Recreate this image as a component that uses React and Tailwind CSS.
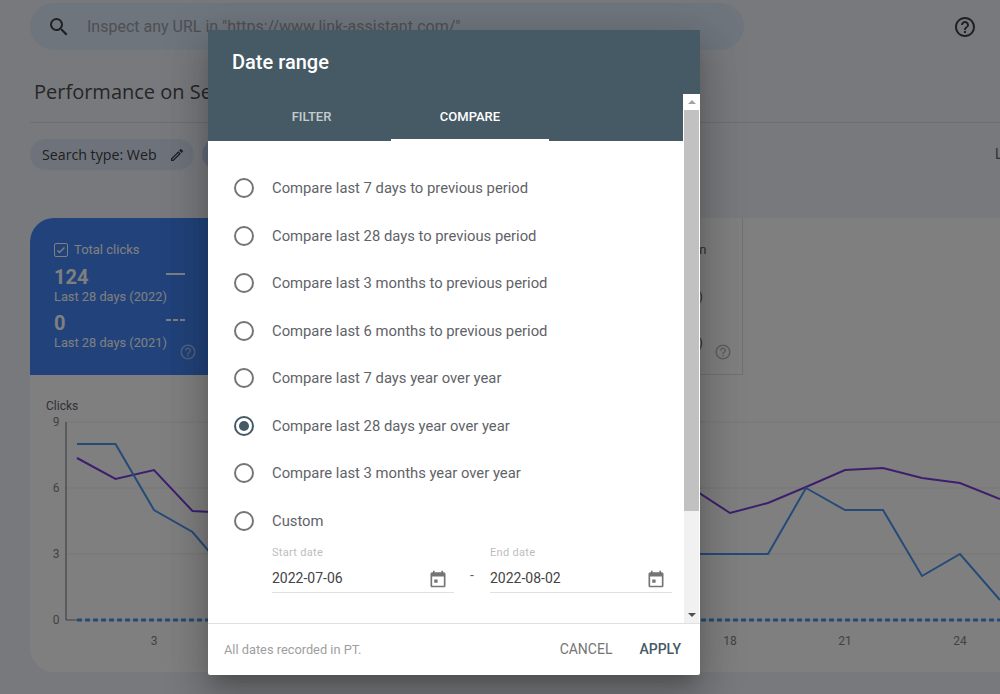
import { useState } from 'react';

const options = [
    'Compare last 7 days to previous period',
    'Compare last 28 days to previous period',
    'Compare last 3 months to previous period',
    'Compare last 6 months to previous period',
    'Compare last 7 days year over year',
    'Compare last 28 days year over year',
    'Compare last 3 months year over year',
    'Custom',
];

const yTicks = [
    { label: '9', y: 422 },
    { label: '6', y: 488 },
    { label: '3', y: 554 },
    { label: '0', y: 620 },
];
const xTicks = [
    { label: '3', x: 154 },
    { label: '18', x: 730 },
    { label: '21', x: 845 },
    { label: '24', x: 960 },
];

const clicks = '77,444 115.5,444 154,510 192.5,532 230,576 690,554 768,554 806,488 845,510 883,510 922,576 960,554 1000,600';
const previous = '77,458 115.5,479 154,470 192.5,511 230,513 690,487 730,513 768,503 806,487 845,470 883,468 922,478 960,483 1000,499';

function HelpIcon({ className }) {
    return (
        <svg viewBox="0 0 24 24" className={className} fill="currentColor">
            <path d="M11 18h2v-2h-2v2zm1-16C6.48 2 2 6.48 2 12s4.48 10 10 10 10-4.48 10-10S17.52 2 12 2zm0 18c-4.41 0-8-3.59-8-8s3.59-8 8-8 8 3.59 8 8-3.59 8-8 8zm0-14c-2.21 0-4 1.79-4 4h2c0-1.1.9-2 2-2s2 .9 2 2c0 2-3 1.75-3 5h2c0-2.25 3-2.5 3-5 0-2.21-1.79-4-4-4z" />
        </svg>
    );
}

function CalendarIcon() {
    return (
        <svg viewBox="0 0 24 24" className="w-5 h-5 text-[#757575]" fill="currentColor">
            <path d="M19 4h-1V2h-2v2H8V2H6v2H5c-1.1 0-2 .9-2 2v14c0 1.1.9 2 2 2h14c1.1 0 2-.9 2-2V6c0-1.1-.9-2-2-2zm0 16H5V9h14v11zM7.5 12.5h4v4h-4z" />
        </svg>
    );
}

function CheckBox({ color }) {
    return (
        <span className={`flex items-center justify-center w-[14px] h-[14px] border rounded-[2px] ${color}`}>
            <svg viewBox="0 0 24 24" className="w-3 h-3" fill="none" stroke="currentColor" strokeWidth="3">
                <path d="M5 13l4 4L19 7" />
            </svg>
        </span>
    );
}

function DateField({ label, value }) {
    return (
        <div className="w-[182px]">
            <div className="text-[11px] leading-[14px] text-[#bdbdbd] tracking-[0.3px]">{label}</div>
            <div className="flex items-center justify-between h-[33px] pt-[5px] pr-[6px] border-b border-[#e0e0e0] text-[14px] text-[#444]">
                <span>{value}</span>
                <CalendarIcon />
            </div>
        </div>
    );
}

function TotalClicksCard() {
    return (
        <div className="relative w-[178px] h-[157px] shrink-0 bg-[#4285f4] text-white pl-6 pt-[23px]">
            <div className="flex items-center gap-[6px] text-[13px] leading-[18px]">
                <CheckBox color="border-white" />
                Total clicks
            </div>
            <div className="text-[20px] leading-6 font-bold mt-[6px]">124</div>
            <div className="text-[12.8px] leading-[15px]">Last 28 days (2022)</div>
            <div className="text-[20px] leading-6 font-bold mt-[7px]">0</div>
            <div className="text-[12.8px] leading-[15px]">Last 28 days (2021)</div>
            <div className="absolute left-[136px] top-[55px] w-[19px] border-t-2 border-white" />
            <div className="absolute left-[136px] top-[101px] w-[19px] flex justify-between">
                <span className="w-[5px] h-[2px] bg-white" />
                <span className="w-[5px] h-[2px] bg-white" />
                <span className="w-[5px] h-[2px] bg-white" />
            </div>
            <HelpIcon className="absolute left-[149px] top-[125px] w-[18px] h-[18px] text-white/50" />
        </div>
    );
}

function PositionCard() {
    return (
        <div className="relative ml-[356px] w-[179px] h-[157px] border-r border-b border-[#e0e0e0] pl-[26px] pt-[23px] text-[#5f6368]">
            <div className="flex items-center gap-[6px] text-[13px] leading-[18px]">
                <CheckBox color="border-[#5f6368]" />
                Average position
            </div>
            <div className="mt-[30px] text-[12.8px] leading-[15px]">Last 28 days (2022)</div>
            <div className="mt-[31px] text-[12.8px] leading-[15px]">Last 28 days (2021)</div>
            <HelpIcon className="absolute right-[10px] top-[125px] w-[18px] h-[18px] text-[#bdbdbd]" />
        </div>
    );
}

function Chart() {
    return (
        <svg viewBox="30 375 970 297" className="w-[970px] h-[297px] block">
            <text x="46" y="410" fontSize="12" fill="#5f6368">Clicks</text>
            {yTicks.map(t => (
                <g key={t.label}>
                    <line x1="66" x2="1000" y1={t.y} y2={t.y} stroke="#ededed" strokeWidth="1" />
                    <text x="56" y={t.y + 4} fontSize="12" textAnchor="middle" fill="#80868b">{t.label}</text>
                </g>
            ))}
            <line x1="66" x2="66" y1="422" y2="620" stroke="#80868b" strokeWidth="1.2" />
            <line x1="66" x2="77" y1="620" y2="620" stroke="#80868b" strokeWidth="1.2" />
            {xTicks.map(t => (
                <text key={t.label} x={t.x} y="645" fontSize="12" textAnchor="middle" fill="#80868b">{t.label}</text>
            ))}
            <polyline points={previous} fill="none" stroke="#7a3ddc" strokeWidth="2" />
            <polyline points={clicks} fill="none" stroke="#4a94f0" strokeWidth="2" />
            <line x1="77" x2="1000" y1="620" y2="620" stroke="#4a94f0" strokeWidth="3" strokeDasharray="5 3" />
        </svg>
    );
}

function DateRangeDialog() {
    const [selected] = useState(5);

    return (
        <div className="absolute left-[208px] top-[30px] w-[492px] h-[645px] flex flex-col bg-white rounded-[2px] shadow-[0_11px_15px_-7px_rgba(0,0,0,0.2),0_24px_38px_3px_rgba(0,0,0,0.14),0_9px_46px_8px_rgba(0,0,0,0.12)]">
            <div className="h-[111px] shrink-0 flex flex-col justify-between bg-[#455a64] text-white pl-6">
                <h2 className="text-[20px] leading-6 font-medium pt-5">Date range</h2>
                <div className="flex text-[13px] font-medium">
                    <div className="w-[159px] h-[48px] flex items-center justify-center text-white/70">FILTER</div>
                    <div className="w-[158px] h-[48px] flex items-center justify-center border-b-2 border-white pt-[2px]">COMPARE</div>
                </div>
            </div>
            <div className="flex-1 pl-[26px] pt-[23.5px] overflow-hidden">
                {options.map((opt, i) => (
                    <div key={opt} className="flex items-center h-[47.5px] gap-[18px] text-[14.8px] text-[#5f6368]">
                        <span className={`flex items-center justify-center w-5 h-5 shrink-0 rounded-full border-2 ${i === selected ? 'border-[#455a64]' : 'border-[#757575]'}`}>
                            {i === selected && <span className="w-[10px] h-[10px] rounded-full bg-[#455a64]" />}
                        </span>
                        {opt}
                    </div>
                ))}
                <div className="flex items-center pl-[38px] mt-[1.5px] gap-[14px]">
                    <DateField label="Start date" value="2022-07-06" />
                    <span className="text-[14px] text-[#5f6368] mt-[12px] w-2 text-center">-</span>
                    <DateField label="End date" value="2022-08-02" />
                </div>
            </div>
            <div className="h-[52px] shrink-0 flex items-center border-t border-[#e0e0e0] pl-4 pr-[19px] text-[14px]">
                <span className="text-[12.8px] pt-[1px] text-[#9e9e9e]">All dates recorded in PT.</span>
                <span className="ml-auto text-[#757575]">CANCEL</span>
                <span className="ml-[27px] font-medium text-[#455a64]">APPLY</span>
            </div>
            {/* native scrollbar of the dialog body, it runs over the header */}
            <div className="absolute right-0 top-[64px] bottom-[52px] w-[17px] flex flex-col bg-[#f1f1f1] border-x border-white">
                <div className="h-[16px] flex items-center justify-center bg-white">
                    <div className="w-0 h-0 border-x-[4px] border-x-transparent border-b-[4px] border-b-[#a3a3a3]" />
                </div>
                <div className="h-[401px] bg-[#c1c1c1]" />
                <div className="mt-auto h-[16px] flex items-center justify-center">
                    <div className="w-0 h-0 border-x-[4px] border-x-transparent border-t-[4px] border-t-[#505050]" />
                </div>
            </div>
        </div>
    );
}

export default function App() {
    return (
        <div className="relative w-[1000px] h-[694px] overflow-hidden bg-[#f1f3f8] font-['Roboto',sans-serif]">
            <div className="flex items-center h-[50px] pt-[3px]">
                <div className="ml-[30px] w-[714px] h-[47px] flex items-center rounded-full bg-[#dfeafa] pl-[17px]">
                    <svg viewBox="0 0 24 24" className="w-6 h-6 text-[#3c4043]" fill="currentColor">
                        <path d="M15.5 14h-.79l-.28-.27A6.47 6.47 0 0 0 16 9.5 6.5 6.5 0 1 0 9.5 16c1.61 0 3.09-.59 4.23-1.57l.27.28v.79l5 4.99L20.49 19l-4.99-5zm-6 0C7.01 14 5 11.99 5 9.5S7.01 5 9.5 5 14 7.01 14 9.5 11.99 14 9.5 14z" />
                    </svg>
                    <span className="ml-[16px] pt-[1px] text-[16px] text-[#9aa0a6]">Inspect any URL in "https://www.link-assistant.com/"</span>
                </div>
                <HelpIcon className="ml-[209px] w-6 h-6 text-[#3c4043]" />
            </div>
            <div className="ml-[34px] mt-[27px] h-[30px] text-[20px] leading-[30px] font-['Open_Sans',sans-serif] text-[#4a4d50]">Performance on Search results</div>
            <div className="ml-[30px] mt-[15px] border-t border-[#dadce0]" />
            <div className="flex items-center ml-[30px] mt-4 h-[31px] gap-2">
                <div className="flex items-center h-[31px] w-[164px] pl-3 gap-3 rounded-full bg-[#dce6f7] text-[14.2px] font-['Open_Sans',sans-serif] text-[#3c4043]">
                    Search type: Web
                    <svg viewBox="0 0 24 24" className="w-4 h-4 text-[#3c4043]" fill="currentColor">
                        <path d="M3 17.25V21h3.75L17.81 9.94l-3.75-3.75L3 17.25zM5.92 19H5v-.92l9.06-9.06.92.92L5.92 19zM20.71 5.63l-2.34-2.34c-.2-.2-.45-.29-.71-.29s-.51.1-.7.29l-1.83 1.83 3.75 3.75 1.83-1.83c.39-.39.39-1.02 0-1.41z" />
                    </svg>
                </div>
                <div className="w-[120px] h-[31px] rounded-full bg-[#c6d8f5]" />
                <span className="ml-auto w-[5px] overflow-hidden text-[14px] text-[#5f6368]">L</span>
            </div>
            <div className="ml-[30px] mt-[48px] w-[970px] h-[454px] bg-white rounded-l-[24px] overflow-hidden">
                <div className="flex h-[157px]">
                    <TotalClicksCard />
                    <PositionCard />
                </div>
                <Chart />
            </div>
            <div className="absolute inset-0 bg-black/50" />
            <DateRangeDialog />
        </div>
    );
}
